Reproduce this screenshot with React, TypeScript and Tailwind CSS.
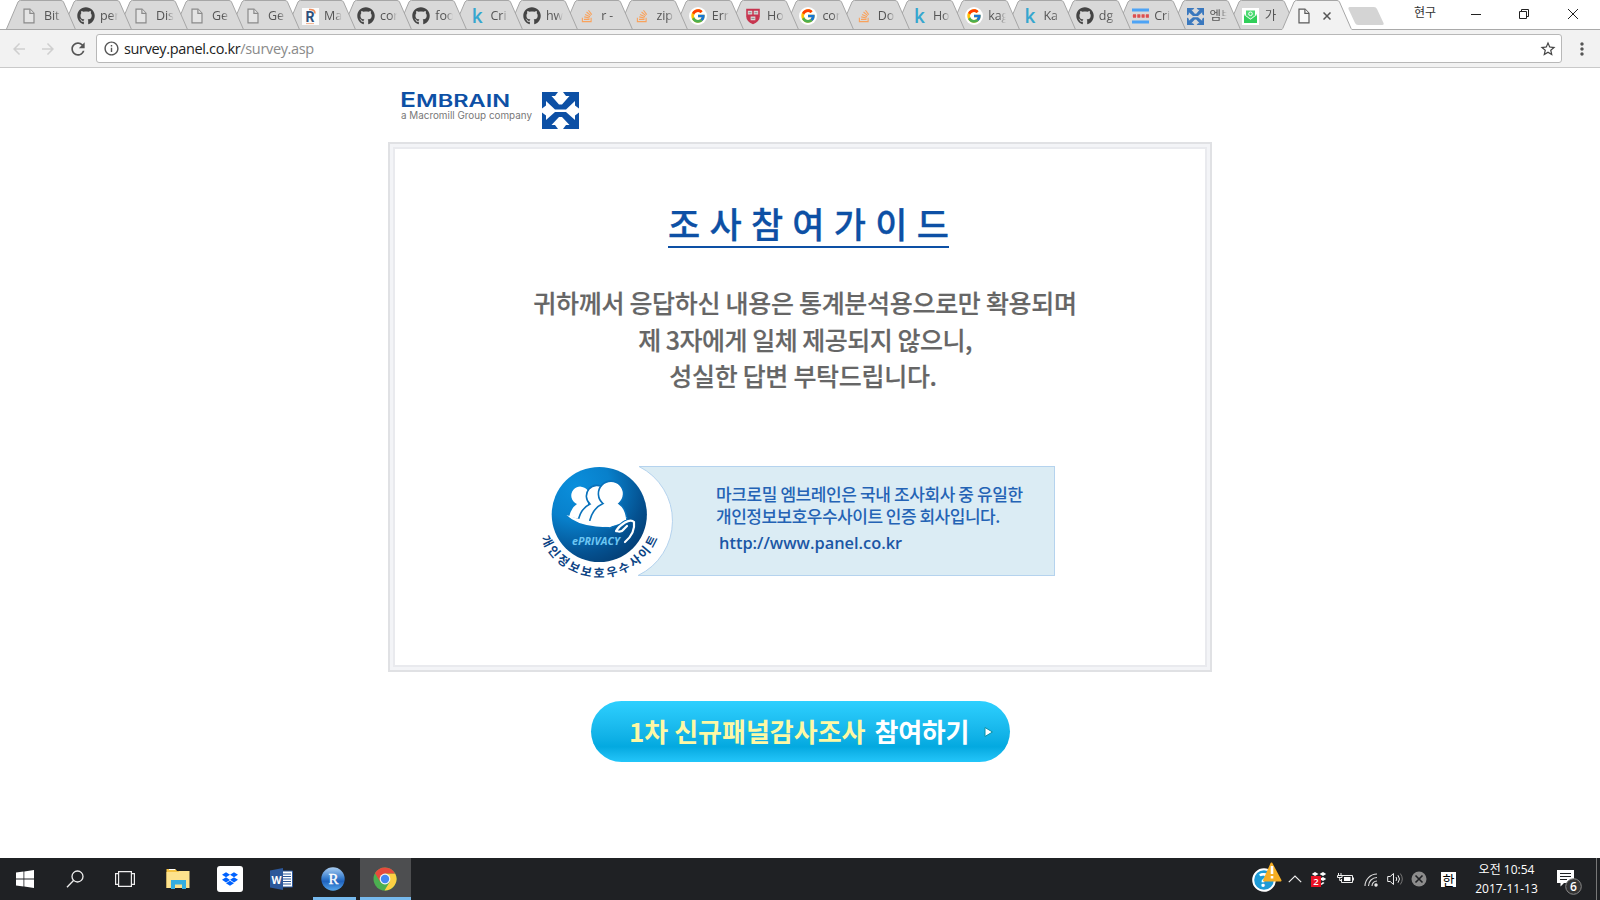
import type { ReactNode } from 'react';
import { FaGithub, FaStackOverflow, FaDropbox } from 'react-icons/fa';
import { FcGoogle } from 'react-icons/fc';
import { MdArrowBack, MdArrowForward, MdRefresh, MdInfoOutline, MdStarBorder, MdMoreVert } from 'react-icons/md';

const UI = "font-['Open_Sans','Noto_Sans_CJK_KR',sans-serif]";
const KR = "font-['Noto_Sans_CJK_KR',sans-serif]";

function FileIcon({ dark = false }: { dark?: boolean }) {
  return (
    <svg viewBox="0 0 16 16" className="size-4" fill={dark ? '#f8f8f8' : '#e4e4e4'} stroke={dark ? '#5a5a5a' : '#8a8a8a'} strokeWidth="1.2">
      <path d="M2 1.200h6l4 4v9.600H2z" />
      <path d="M7.900 1.200v4.200H12" />
    </svg>
  );
}

function EmbrainMark({ color, className }: { color: string; className: string }) {
  return (
    <svg viewBox="0 0 37 37" className={className} fill={color}>
      <path d="M0 0h16l-3 4H9.500l7.500 8.500h3L27.500 4H24l-3-4H37v16.500l-4-3V9l-9 8.500h-11L4 9v4.500l-4 3z" />
      <path d="M0 20.500l4 3V28l9-8h11l9 8v-4.500l4-3V37H21l3-4h3.500L20 25h-3l-7.500 8H13l3 4H0z" />
    </svg>
  );
}

const github = <FaGithub className="size-4.5 text-[#444]" />;
const file = <FileIcon />;
const kaggle = <span className="pl-px text-[19px] leading-4 font-semibold text-[#35a6cf]">k</span>;
const stack = <FaStackOverflow className="size-3.5 text-[#f9a25c]" />;
const google = (
  <span className="flex size-4.5 items-center justify-center rounded-full bg-white">
    <FcGoogle className="size-4" />
  </span>
);
const rIcon = (
  <svg viewBox="0 0 17 17" className="size-[17px]">
    <rect width="17" height="17" fill="#fbfbfb" />
    <path d="M7 1.500q6-.5 6 4" stroke="#ef8d5c" strokeWidth="1.600" fill="none" />
    <text x="3.500" y="13.500" fontSize="14" fontWeight="700" fontFamily="Roboto" fill="#2d4f7c">R</text>
    <path d="M4 15.600h8" stroke="#f2b08d" />
  </svg>
);
const shield = (
  <svg viewBox="0 0 16 18" className="h-[17px] w-4">
    <path d="M.8.800h14.400v8q0 5.500-7.200 8.400Q.8 14.300.8 8.800z" fill="#c7354f" />
    <path d="M2.500 3h4.700v4H2.500zM8.800 3h4.700v4H8.800zM5.500 9h5v4h-5z" fill="#d9d9d9" />
    <path d="M3.300 5h3M9.600 5h3M6.300 11h3.400" stroke="#888" />
  </svg>
);
const cran = (
  <svg viewBox="0 0 17 16" className="h-4 w-[17px]">
    <rect y=".5" width="17" height="3" fill="#4da3f5" />
    <rect y="12.500" width="17" height="3" fill="#4da3f5" />
    <path d="M0 8h17" stroke="#efb3b3" strokeWidth="1.500" />
    <path d="M1 8h16" stroke="#dc5050" strokeWidth="3.500" strokeDasharray="3 1.300" />
  </svg>
);
const mail = (
  <svg viewBox="0 0 17 17" className="size-[17px]">
    <rect width="17" height="17" fill="#fff" />
    <path d="M2 6l6.500 5L15 6v9H2z" fill="#31cf5a" />
    <path d="M4 2.500h9v5l-4.500 3.300L4 7.500z" fill="#4ddb73" />
    <path d="M2 6.500l6.500 4.800L15 6.500" fill="none" stroke="#fff" strokeWidth=".8" />
    <circle cx="8.500" cy="5.800" r="1.800" fill="none" stroke="#fff" />
  </svg>
);

const tabs: { icon: ReactNode; label: string }[] = [
  { icon: file, label: 'Bit' },
  { icon: github, label: 'per' },
  { icon: file, label: 'Dis' },
  { icon: file, label: 'Ge' },
  { icon: file, label: 'Ge' },
  { icon: rIcon, label: 'Ma' },
  { icon: github, label: 'cor' },
  { icon: github, label: 'foo' },
  { icon: kaggle, label: 'Cri' },
  { icon: github, label: 'hw' },
  { icon: stack, label: 'r -' },
  { icon: stack, label: 'zip' },
  { icon: google, label: 'Err' },
  { icon: shield, label: 'Ho' },
  { icon: google, label: 'cor' },
  { icon: stack, label: 'Do' },
  { icon: kaggle, label: 'Ho' },
  { icon: google, label: 'kag' },
  { icon: kaggle, label: 'Ka' },
  { icon: github, label: 'dg' },
  { icon: cran, label: 'Cri' },
  { icon: <EmbrainMark color="#3a78be" className="size-[17px]" />, label: '엠브' },
  { icon: mail, label: '가' },
];

function TabShape({ active = false }: { active?: boolean }) {
  return (
    <svg viewBox="0 0 70 30" className="absolute top-0 left-0 h-[30px] w-[70px]">
      <path
        d="M.3 29.500 12 2Q12.800.500 14.500.500H55Q56.800.500 57.500 2L69.500 29.500"
        fill={active ? '#f2f2f2' : '#d9d9d9'}
        stroke="#a6a6a6"
      />
      {active ? <path d="M.3 29.500H69.500" stroke="#f2f2f2" strokeWidth="1.400" /> : <path d="M0 29.500H70" stroke="#a6a6a6" />}
    </svg>
  );
}

function TabStrip() {
  return (
    <header className={`flex h-[30px] items-stretch border-b border-[#a9a9a9] bg-white pl-1.5 ${UI}`}>
      {tabs.map((tab, i) => (
        <div
          key={i}
          className={`relative h-[30px] shrink-0 ${i < 6 ? 'w-14' : 'w-[55.3px]'}`}
          style={{ zIndex: 30 - i }}
        >
          <TabShape />
          <div className="relative flex h-[30px] items-center pt-0.5 pl-[15px]">
            <div className="flex w-4.5 shrink-0 items-center justify-center">{tab.icon}</div>
            <div className="ml-1.25 w-4.5 overflow-hidden mask-r-from-60% text-[12.5px] tracking-[-0.1px] whitespace-nowrap text-[#555]">{tab.label}</div>
          </div>
        </div>
      ))}
      <div className="relative z-40 h-[30px] w-[74px] shrink-0">
        <TabShape active />
        <div className="relative flex h-[30px] items-center gap-[10px] pt-0.5 pl-[15px]">
          <FileIcon dark />
          <svg viewBox="0 0 8 8" className="size-2" stroke="#555" strokeWidth="1.500">
            <path d="M.5.500l7 7M7.500.500l-7 7" />
          </svg>
        </div>
      </div>
      <svg viewBox="0 0 36 18" className="mt-[7px] -ml-2 h-[18px] w-9 shrink-0" fill="#d4d4d4">
        <path d="M2 0h24q2 0 3 2l6.500 14q.8 2-1.500 2H10q-2 0-3-2L.5 2Q0 0 2 0z" />
      </svg>
      <div className="grow" />
      <div className="mr-[34px] pt-[5px] text-[12px] leading-4 text-[#333]">현구</div>
      <svg viewBox="0 0 110 12" className="mt-2 mr-5 h-3 w-[110px] shrink-0" fill="none" stroke="#222">
        <path d="M1 6.500h10" />
        <path d="M49.500 3.500h7v7h-7zM51.500 3.500v-2h7v7h-2" />
        <path d="M98 1l10 10M108 1L98 11" />
      </svg>
    </header>
  );
}

function Toolbar() {
  return (
    <div className={`flex h-[38px] shrink-0 items-center border-b border-[#c9c9c9] bg-[#f2f2f2] ${UI}`}>
      <MdArrowBack className="ml-[10px] size-[18px] text-[#cfcfcf]" />
      <MdArrowForward className="ml-[11px] size-[18px] text-[#cfcfcf]" />
      <MdRefresh className="ml-[11px] size-5 text-[#555]" />
      <div className="ml-2 flex h-[29px] grow items-center rounded-[3px] border border-[#b8b8b8] bg-white">
        <MdInfoOutline className="ml-1.5 size-[17px] text-[#555]" />
        <span className="ml-1 text-[14.5px] tracking-[-0.35px] text-[#222]">
          survey.panel.co.kr<span className="text-[#8a8a8a]">/survey.asp</span>
        </span>
        <MdStarBorder className="mr-1 ml-auto size-[18px] text-[#444]" />
      </div>
      <MdMoreVert className="mr-2 ml-[10px] size-5 text-[#555]" />
    </div>
  );
}

function Logo() {
  return (
    <div className="flex items-start gap-[9px] pt-6 pl-[13px]">
      <svg viewBox="0 0 132 34" className="h-[34px] w-[132px]">
        <g fill="#0d50a5" fontFamily="Inter" fontWeight="600">
          <text x="-1" y="14.500" fontSize="19.500" textLength="16" lengthAdjust="spacingAndGlyphs">E</text>
          <text x="15" y="14.500" fontSize="17" textLength="94" lengthAdjust="spacingAndGlyphs">MBRAIN</text>
        </g>
        <text x="0" y="27" fontSize="10" fontFamily="Inter" fill="#777" textLength="131" lengthAdjust="spacingAndGlyphs">
          a Macromill Group company
        </text>
      </svg>
      <EmbrainMark color="#0d50a5" className="size-[37px]" />
    </div>
  );
}

function Emblem() {
  return (
    <svg viewBox="0 0 160 124" className="h-[124px] w-[160px] shrink-0">
      <defs>
        <radialGradient id="sphere" cx=".25" cy=".2" r=".9">
          <stop offset="0" stopColor="#0a8fdc" />
          <stop offset=".4" stopColor="#0880cb" />
          <stop offset=".8" stopColor="#04508f" />
          <stop offset="1" stopColor="#043f76" />
        </radialGradient>
        <path id="arc" d="M10.900 78.100A63 63 0 0 0 127.700 78.100" />
      </defs>
      <path d="M109 6.500H160V115.500H108A60.700 60.700 0 0 0 109 6.500" fill="#dbecf4" />
      <path d="M160 6.500H109A60.700 60.700 0 0 1 108 115.500H160" fill="none" stroke="#b5d3ee" />
      <circle cx="69.300" cy="54.500" r="47.600" fill="url(#sphere)" />
      <g fill="#fff">
        <path d="M47 44A9 9 0 1 1 58 31V60L39 57Q41 48 47 44z" />
        <g stroke="#0871bb" strokeWidth="1.600">
          <path d="M60 44A10 10 0 1 1 74 28V65L48 62Q50 49 60 44z" />
          <path d="M73 43.500A12.600 12.600 0 1 1 89 43.500Q96 48 97 60L80 68 59 65Q61 49 73 43.500z" />
        </g>
        <path d="M36.500 55Q52 61 74 62.500L97 57.500 90 63.500Q80 68 66 66.500 46 64.500 36.500 55z" />
      </g>
      <path d="M86 71Q89 66 95 62.500T104 62Q105.500 73 95 82M87 71Q91 73 94 69L97 66" fill="none" stroke="#fff" strokeWidth="2.200" strokeLinecap="round" />
      <text x="42" y="84.500" fontFamily="Open Sans" fontSize="10.500" fontWeight="700" fontStyle="italic" fill="#6cc6f3" textLength="48" lengthAdjust="spacingAndGlyphs">
        ePRIVACY
      </text>
      <text fontFamily="Noto Sans CJK KR" fontSize="12" fontWeight="700" fill="#0b4384">
        <textPath href="#arc" textLength="149" lengthAdjust="spacing">개인정보보호우수사이트</textPath>
      </text>
    </svg>
  );
}

function PrivacyBanner() {
  return (
    <div className="flex w-full items-start pl-[135px]">
      <Emblem />
      <div className={`mt-1.5 h-[110px] w-[365px] border border-l-0 border-[#b5d3ee] bg-[#dbecf4] pt-4 pl-[26px] text-[17px] leading-[22px] font-medium whitespace-nowrap text-[#2463b5] ${KR}`}>
        <p className="tracking-[-0.4px]">마크로밀 엠브레인은 국내 조사회사 중 유일한</p>
        <p className="tracking-[-0.5px]">개인정보보호우수사이트 인증 회사입니다.</p>
        <p className="mt-[5px] pl-[3px] font-['Open_Sans',sans-serif] text-[16.400px] font-semibold text-[#1b57a5]">http://www.panel.co.kr</p>
      </div>
    </div>
  );
}

function Survey() {
  return (
    <main className={`flex grow flex-col bg-white pl-[388px] ${KR}`}>
      <Logo />
      <section className="mt-[13px] flex h-[530px] w-[824px] flex-col border-2 border-[#e0e1e4] bg-[#f3f4f7] p-[3px]">
        <div className="flex grow flex-col items-start border-2 border-[#e9eaee] bg-white">
          <h1 className="mt-[49px] ml-[273px] flex h-[50px] w-[281px] justify-between border-b-2 border-[#0d50a5] text-[35px] leading-[49px] font-medium text-[#0d50a5] [-webkit-text-stroke:0.3px_#0d50a5]">
            {'조사참여가이드'.split('').map((c, i) => (
              <span key={i}>{c}</span>
            ))}
          </h1>
          <div className="mt-[36px] ml-[5px] w-full text-center text-[25px] leading-[36.600px] font-medium tracking-[-0.3px] text-[#666] [-webkit-text-stroke:0.2px_#666]">
            <p>귀하께서 응답하신 내용은 통계분석용으로만 확용되며</p>
            <p className="tracking-[-0.5px]">제 3자에게 일체 제공되지 않으니,</p>
            <p className="pr-1">성실한 답변 부탁드립니다.</p>
          </div>
          <div className="mt-[66px] w-full">
            <PrivacyBanner />
          </div>
        </div>
      </section>
      <button className="mt-[29px] ml-[203px] flex h-[61px] w-[419px] items-center rounded-full bg-linear-to-b from-[#2dd0ff] via-[#03a9e0] via-75% to-[#22c6fa] pb-0.5 pl-[38px] text-[26px] font-bold whitespace-nowrap text-white">
        <span className="text-[#fdf8a4]">1차 신규패널감사조사</span>
        <span className="ml-[9px] tracking-[-0.3px]">참여하기</span>
        <svg viewBox="0 0 10 12" className="mt-0.5 ml-[15px] h-3 w-2.5">
          <path d="M1 1.500L8.500 6 1 10.500z" fill="#fff" stroke="#0790a8" />
        </svg>
      </button>
    </main>
  );
}

function Cell({ children, w, className = '' }: { children: ReactNode; w: string; className?: string }) {
  return <div className={`flex h-full shrink-0 items-center justify-center ${w} ${className}`}>{children}</div>;
}

function Taskbar() {
  return (
    <footer className={`flex h-[42px] shrink-0 items-stretch bg-[#1f2124] text-white ${UI}`}>
      <Cell w="w-[50px]">
        <svg viewBox="0 0 18 18" className="size-[18px]" fill="#fff">
          <path d="M0 2.500L7.500 1.500V8.600H0zM8.300 1.400L18 0V8.600H8.300zM0 9.400H7.500V16.500L0 15.500zM8.300 9.400H18V18L8.300 16.600z" />
        </svg>
      </Cell>
      <Cell w="w-[50px]">
        <svg viewBox="0 0 18 18" className="size-[18px]" fill="none" stroke="#eee" strokeWidth="1.300">
          <circle cx="11.500" cy="6.500" r="5.500" />
          <path d="M7.500 10.500L1 17.300" />
        </svg>
      </Cell>
      <Cell w="w-[50px]">
        <svg viewBox="0 0 20 16" className="h-4 w-5" fill="none" stroke="#eee" strokeWidth="1.200">
          <path d="M3.600.6h12.800v14.800H3.600zM3 2.600H.6v10.800H3M17 2.600h2.400v10.800H17" />
        </svg>
      </Cell>
      <Cell w="w-[51.500px]" className="ml-[3px] pr-0.5 pb-0.5">
        <svg viewBox="0 0 24 21" className="h-[21px] w-6">
          <path d="M.5 1h9l1.500 2H23v17H.5z" fill="#f5c445" />
          <path d="M.5 4h12l1-1H23.500v17H.5z" fill="#fde28d" />
          <path d="M3 1.500h6" stroke="#fff" />
          <path d="M5 21v-9h15v9h-4v-4.500H9V21z" fill="#35aee0" />
        </svg>
      </Cell>
      <Cell w="w-[51.500px]">
        <div className="flex size-[26px] items-center justify-center rounded-[3px] bg-white">
          <FaDropbox className="size-4 text-[#0062ff]" />
        </div>
      </Cell>
      <Cell w="w-[51.500px]">
        <svg viewBox="0 0 23 22" className="h-[22px] w-[23px]">
          <path d="M12 3h10.500v16H12z" fill="#fff" stroke="#2b579a" />
          <path d="M13 6h8M13 8.500h8M13 11h8M13 13.500h8M13 16h8" stroke="#2b579a" />
          <path d="M0 2.500L13 0v22L0 19.500z" fill="#2b579a" />
          <text x="1.500" y="15.500" fontFamily="Open Sans" fontWeight="700" fontSize="11" fill="#fff" textLength="10" lengthAdjust="spacingAndGlyphs">W</text>
        </svg>
      </Cell>
      <Cell w="w-[51.500px]" className="relative">
        <svg viewBox="0 0 24 24" className="size-6">
          <defs>
            <linearGradient id="rs" x1="0" y1="0" x2="0" y2="1">
              <stop offset="0" stopColor="#a9cdf2" />
              <stop offset=".45" stopColor="#3a7fce" />
              <stop offset=".6" stopColor="#1f62bd" />
              <stop offset="1" stopColor="#55a6ec" />
            </linearGradient>
          </defs>
          <circle cx="12" cy="12" r="11.700" fill="url(#rs)" />
          <text x="12.500" y="17" textAnchor="middle" fontFamily="Liberation Serif" fontSize="15" fill="#fff" stroke="#fff" strokeWidth=".4">R</text>
        </svg>
        <div className="absolute bottom-0 left-[5px] h-[3px] w-[43px] bg-[#76b9ed]" />
      </Cell>
      <Cell w="w-[51px]" className="relative ml-px bg-[#4d4e50] pr-0.5">
        <svg viewBox="0 0 24 24" className="size-6">
          <circle cx="12" cy="12" r="11.500" fill="#4caf50" />
          <path d="M12 6.500H22.100A11.500 11.500 0 0 1 11.500 23.500L16.800 14.700z" fill="#fdd043" />
          <path d="M2 6.200A11.500 11.500 0 0 1 22.100 6.500H12L7.200 14.800z" fill="#e64a3c" />
          <circle cx="12" cy="12" r="5.400" fill="#f5f5f5" />
          <circle cx="12" cy="12" r="4.200" fill="#4487f4" />
        </svg>
        <div className="absolute bottom-0 left-0 h-[3px] w-full bg-[#76b9ed]" />
      </Cell>
      <div className="grow" />
      <Cell w="w-[35px]">
        <svg viewBox="0 0 32 30" className="mb-1 h-[30px] w-8">
          <circle cx="13" cy="18" r="10.800" fill="#1d9ad6" stroke="#fff" strokeWidth="2" />
          <text x="12.500" y="25" textAnchor="middle" fontFamily="Open Sans" fontWeight="700" fontSize="19" fill="#fff">?</text>
          <path d="M20.500 1.500L29.500 18.500H13z" fill="#f5ae25" stroke="#f5ae25" strokeWidth="2" strokeLinejoin="round" />
          <path d="M21 4v8M21 14v2.600" stroke="#fff" strokeWidth="2.600" />
        </svg>
      </Cell>
      <Cell w="w-[22px]">
        <svg viewBox="0 0 14 8" className="h-2 w-3.5" fill="none" stroke="#eee" strokeWidth="1.200"><path d="M.8 7.200L7 1l6.200 6.200" /></svg>
      </Cell>
      <Cell w="w-[26px]">
        <svg viewBox="0 0 16 16" className="size-4">
          <path d="M4 1l3.500 2L4 5 .8 3zM12 1l3.200 2L12 5 8.500 3zM12 6l3.200 2L12 10 8.500 8zM12 11l1.500 1-3 2-1-1z" fill="#fff" />
          <rect y="5" width="10" height="11" fill="#e81123" />
          <text x="2.300" y="14" fontFamily="Open Sans" fontSize="9.500" fontWeight="600" fill="#fff">2</text>
        </svg>
      </Cell>
      <Cell w="w-[26px]">
        <svg viewBox="0 0 17 12" className="h-3 w-[17px]" fill="none" stroke="#eee">
          <path d="M5 2.500h10.500v7H4.500V6M16.500 4.500v3M1.500 0v2.500M4 0v2.500M.5 2.500h4.500v2H.5zM2.700 4.500v3h2" />
          <path d="M7 4h6.500v4H7z" fill="#fff" stroke="none" />
        </svg>
      </Cell>
      <Cell w="w-[25px]">
        <svg viewBox="0 0 14 14" className="mt-0.5 size-3.5" fill="none" stroke="#ddd" strokeWidth="1.100">
          <path d="M1 13A12 12 0 0 1 13 1M4.500 13A8.500 8.500 0 0 1 13 4.500M8 13A5 5 0 0 1 13 8" />
          <circle cx="12" cy="12" r="1.200" fill="#fff" />
        </svg>
      </Cell>
      <Cell w="w-[24px]">
        <svg viewBox="0 0 17 14" className="h-3.5 w-[17px]" fill="none" stroke="#eee">
          <path d="M.7 4.500h2.500L6.500 1.500v11L3.200 9.500H.7zM9 5q1.500 2 0 4M11 3.300q3 3.700 0 7.400" />
          <path d="M13.300 1.500q4 5.500 0 11" stroke="#777" />
        </svg>
      </Cell>
      <Cell w="w-[24px]">
        <svg viewBox="0 0 16 16" className="size-4">
          <circle cx="8" cy="8" r="7.500" fill="#8c8c8c" />
          <path d="M4.500 4.500l7 7M11.500 4.500l-7 7" stroke="#1f2124" strokeWidth="1.600" />
        </svg>
      </Cell>
      <Cell w="w-[37px]" className="pr-0.5">
        <div className={`flex size-[15px] items-center justify-center bg-white text-[13px] leading-none text-black ${KR}`}>한</div>
      </Cell>
      <div className="flex w-[78px] flex-col items-center justify-center pr-px pb-px text-[12px] leading-[19px] whitespace-nowrap">
        <span>오전 10:54</span>
        <span>2017-11-13</span>
      </div>
      <Cell w="w-[50px]" className="pr-1">
        <svg viewBox="0 0 28 28" className="mt-1.5 size-7">
          <path d="M2 2h17v13H9l-3.500 3.500V15H2z" fill="#fff" />
          <path d="M5 5.500h11M5 8.500h11M5 11.500h7" stroke="#1f2124" strokeWidth="1.200" />
          <circle cx="18.500" cy="18.500" r="7.800" fill="#333" stroke="#888" />
          <text x="18.500" y="22.700" textAnchor="middle" fontFamily="Open Sans" fontWeight="600" fontSize="12" fill="#fff">6</text>
        </svg>
      </Cell>
      <div className="w-1 border-l border-[#777]" />
    </footer>
  );
}

export default function App() {
  return (
    <div className="flex h-[900px] w-[1600px] flex-col overflow-hidden bg-white">
      <TabStrip />
      <Toolbar />
      <Survey />
      <Taskbar />
    </div>
  );
}
